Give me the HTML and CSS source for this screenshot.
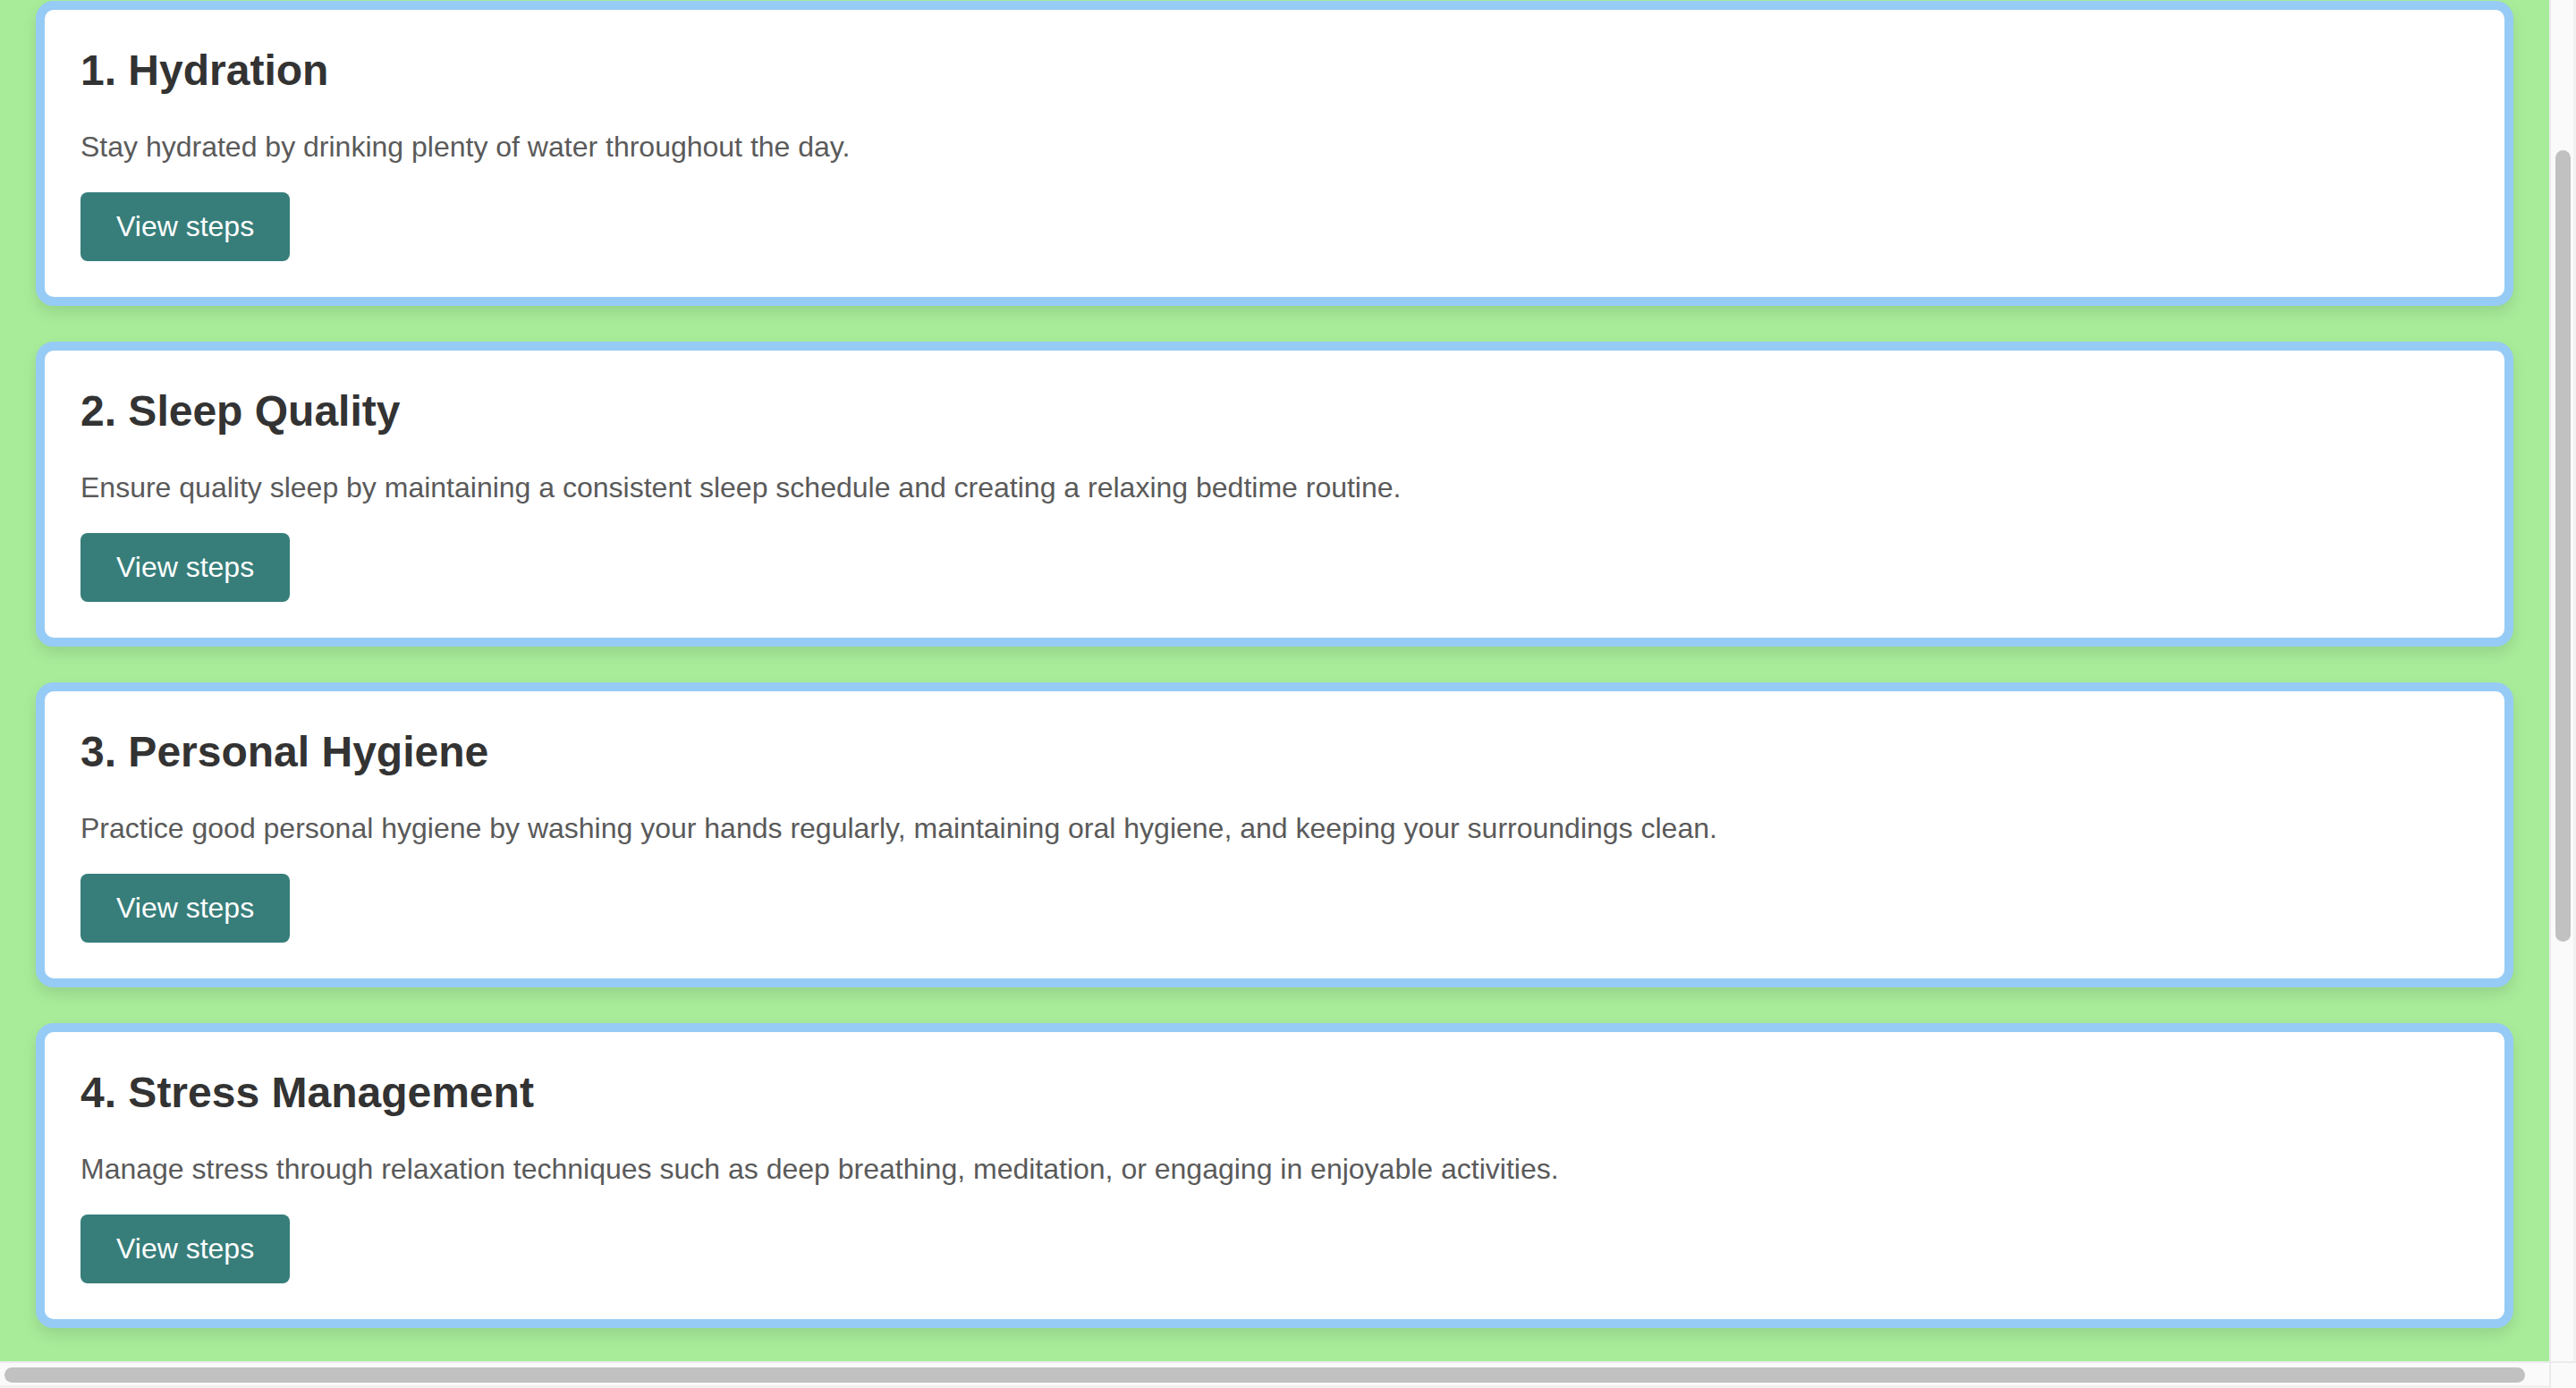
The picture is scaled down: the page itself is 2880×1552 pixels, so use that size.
FILE: index.html
```html
<!DOCTYPE html>
<html lang="en">
<head>
<meta charset="utf-8">
<title>Health Tips</title>
<link rel="stylesheet" href="styles.css">
</head>
<body>
<div class="frame">
  <main class="page">
    <section class="card">
      <h2 class="card-title">1. Hydration</h2>
      <p class="card-text">Stay hydrated by drinking plenty of water throughout the day.</p>
      <button class="card-btn" type="button">View steps</button>
    </section>
    <section class="card">
      <h2 class="card-title">2. Sleep Quality</h2>
      <p class="card-text">Ensure quality sleep by maintaining a consistent sleep schedule and creating a relaxing bedtime routine.</p>
      <button class="card-btn" type="button">View steps</button>
    </section>
    <section class="card">
      <h2 class="card-title">3. Personal Hygiene</h2>
      <p class="card-text">Practice good personal hygiene by washing your hands regularly, maintaining oral hygiene, and keeping your surroundings clean.</p>
      <button class="card-btn" type="button">View steps</button>
    </section>
    <section class="card">
      <h2 class="card-title">4. Stress Management</h2>
      <p class="card-text">Manage stress through relaxation techniques such as deep breathing, meditation, or engaging in enjoyable activities.</p>
      <button class="card-btn" type="button">View steps</button>
    </section>
  </main>
  <div class="vscroll"><div class="vthumb"></div></div>
  <div class="hscroll"><div class="hthumb"></div></div>
  <div class="corner"></div>
</div>
</body>
</html>
```
FILE: styles.css
```css
html, body {
  margin: 0;
  padding: 0;
  height: 100%;
  overflow: hidden;
}

body {
  font-family: "Liberation Sans", Arial, sans-serif;
}

.frame {
  display: grid;
  grid-template-columns: 1fr 30px;
  grid-template-rows: 1fr 30px;
  width: 100vw;
  height: 100vh;
}

.page {
  background: #a8ec9a;
  padding: 1px 40px 0;
  display: flex;
  flex-direction: column;
  gap: 40px;
  overflow: hidden;
}

.card {
  background: #ffffff;
  border: 10px solid #96cbf5;
  border-radius: 20px;
  padding: 40px;
  box-shadow: 0 8px 16px rgba(0, 0, 0, 0.1);
  display: flex;
  flex-direction: column;
  align-items: flex-start;
  flex: none;
}

.card-title {
  margin: 0 0 40px;
  font-size: 48px;
  font-weight: 700;
  line-height: normal;
  color: #333333;
}

.card-text {
  margin: 0 0 32px;
  font-size: 32px;
  line-height: normal;
  color: #5a5a5a;
}

.card-btn {
  background: #377e7b;
  color: #ffffff;
  border: none;
  border-radius: 8px;
  padding: 20px 40px;
  font-family: "Liberation Sans", Arial, sans-serif;
  font-size: 32px;
  line-height: normal;
  cursor: pointer;
}

.vscroll {
  background: #fafafa;
  border-left: 2px solid #ebebeb;
  border-right: 3px solid #f1f1f1;
  padding: 168px 3px 0 5px;
}

.vthumb {
  width: 17px;
  height: 885px;
  border-radius: 9px;
  background: #c1c1c1;
}

.hscroll {
  background: #fafafa;
  border-top: 2px solid #ebebeb;
  border-bottom: 3px solid #f1f1f1;
  padding: 5px 0 0 5px;
}

.hthumb {
  width: 2818px;
  height: 17px;
  border-radius: 9px;
  background: #c1c1c1;
}

.corner {
  background: #fafafa;
  border-left: 2px solid #ebebeb;
  border-top: 2px solid #ebebeb;
}
```
